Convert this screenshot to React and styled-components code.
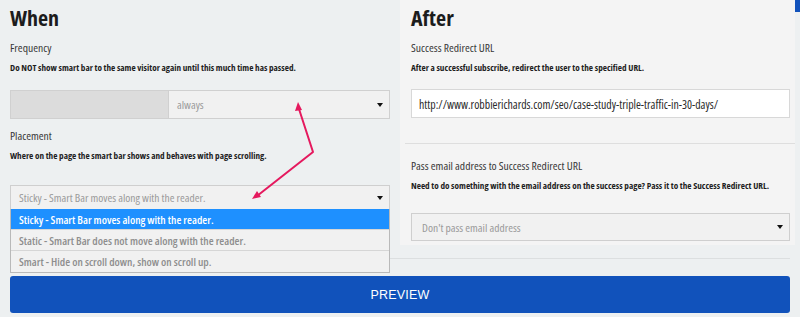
import React from 'react';
import styled, { createGlobalStyle } from 'styled-components';

const GlobalStyle = createGlobalStyle`
  html, body { margin: 0; padding: 0; }
  body { font-family: "Open Sans", "DejaVu Sans", sans-serif; }
  * { box-sizing: border-box; }
`;

const Page = styled.div`
  position: relative;
  width: 800px;
  height: 317px;
  overflow: hidden;
  background: #edf0f1;
  font-family: "Open Sans", sans-serif;
  font-stretch: 75%;
  color: #333;
`;

const Columns = styled.div`
  display: grid;
  grid-template-columns: 400px 395px;
  height: 245px;
`;

const Column = styled.section`
  position: relative;
  padding: ${p => (p.$panel ? '0 5px 0 11px' : '0 10px')};
  background: ${p => (p.$panel ? '#f4f4f4' : 'transparent')};
`;

const Heading = styled.h2`
  margin: 0;
  padding-top: 3px;
  font-size: 22px;
  line-height: 28px;
  font-weight: 700;
  color: #1c1c1c;
`;

const Label = styled.div`
  margin-top: ${p => p.$top || 10}px;
  font-size: 11.6px;
  line-height: 14px;
  color: #383838;
`;

const Help = styled.div`
  margin-top: 6px;
  font-size: 9.2px;
  line-height: 13px;
  font-weight: 700;
  color: #1e1e1e;
`;

const Split = styled.div`
  display: grid;
  grid-template-columns: 158px 1fr;
  height: 29px;
  margin-top: 16px;
  border: 1px solid #d0d0d0;
`;

const Blank = styled.div`
  background: #dcdcdc;
  border-right: 1px solid #d0d0d0;
`;

const SelectBox = styled.div`
  display: flex;
  align-items: center;
  justify-content: space-between;
  height: ${p => p.$h || 28}px;
  margin-top: ${p => p.$top || 0}px;
  padding: 0 6px 0 ${p => p.$pad || 8}px;
  background: #f1f1f1;
  border: ${p => (p.$bare ? 'none' : '1px solid #cfcfcf')};
  border-bottom: ${p => (p.$open ? '2px solid #2a2a2a' : p.$bare ? 'none' : '1px solid #cfcfcf')};
  font-size: 11.5px;
  color: #9a9a9a;
`;

const Caret = styled.span`
  width: 0;
  height: 0;
  border-left: 3px solid transparent;
  border-right: 3px solid transparent;
  border-top: 4px solid #111;
`;

const Menu = styled.ul`
  position: absolute;
  left: 10px;
  right: 10px;
  top: 209px;
  margin: 0;
  padding: 0;
  list-style: none;
  background: #f1f1f1;
  border: 1px solid #b9b9b9;
  border-top: none;
  z-index: 2;
`;

const Option = styled.li`
  height: 21px;
  padding: 0 8px;
  display: flex;
  align-items: center;
  font-size: 11.3px;
  font-weight: 600;
  color: ${p => (p.$active ? '#fff' : '#8e8e8e')};
  background: ${p => (p.$active ? '#1e90ff' : 'transparent')};
  border-bottom: ${p => (p.$last ? 'none' : '1px solid #d6d6d6')};
`;

const TextInput = styled.div`
  display: flex;
  align-items: center;
  height: 29px;
  margin-top: 15px;
  padding: 0 7px;
  background: #fff;
  border: 1px solid #d8d8d8;
  font-size: 11.8px;
  color: #2a2a2a;
`;

const Divider = styled.hr`
  margin: ${p => p.$m || '0'};
  border: none;
  border-top: 1px solid ${p => p.$c || '#dedede'};
`;

const Footer = styled.div`
  padding: 0 10px;
`;

const PreviewButton = styled.button`
  display: block;
  width: 100%;
  height: 37px;
  margin-top: 17px;
  border: none;
  border-radius: 3px;
  background: #1152bb;
  color: #fff;
  font-family: "Liberation Sans", Arial, sans-serif;
  font-size: 12.5px;
  letter-spacing: 0.2px;
  cursor: pointer;
`;

const CornerTab = styled.div`
  position: absolute;
  top: 0;
  right: 0;
  width: 5px;
  height: 12px;
  background: #1152bb;
`;

const Overlay = styled.svg`
  position: absolute;
  inset: 0;
  pointer-events: none;
  z-index: 3;
`;

const placements = [
  'Sticky - Smart Bar moves along with the reader.',
  'Static - Smart Bar does not move along with the reader.',
  'Smart - Hide on scroll down, show on scroll up.',
];

const Arrow = () => (
  <Overlay width="800" height="317" viewBox="0 0 800 317">
    <polyline
      points="299,109 313,152 257,196"
      fill="none"
      stroke="#e5195e"
      strokeWidth="2"
      strokeLinejoin="round"
    />
    <path d="M298,102 L295,111 L302,110 Z" fill="#e5195e" />
    <path d="M252,199 L257,191 L261,197 Z" fill="#e5195e" />
  </Overlay>
);

export default function App() {
  return (
    <>
      <GlobalStyle />
      <Page>
        <Columns>
          <Column>
            <Heading>When</Heading>
            <Label>Frequency</Label>
            <Help>Do NOT show smart bar to the same visitor again until this much time has passed.</Help>
            <Split>
              <Blank />
              <SelectBox $h={27} $pad={8} $bare>
                always
                <Caret />
              </SelectBox>
            </Split>
            <Label>Placement</Label>
            <Help>Where on the page the smart bar shows and behaves with page scrolling.</Help>
            <SelectBox $top={23} $h={26} $open>
              {placements[0]}
              <Caret />
            </SelectBox>
            <Menu>
              {placements.map((text, i) => (
                <Option key={text} $active={i === 0} $last={i === placements.length - 1}>
                  {text}
                </Option>
              ))}
            </Menu>
          </Column>
          <Column $panel>
            <Heading>After</Heading>
            <Label>Success Redirect URL</Label>
            <Help>After a successful subscribe, redirect the user to the specified URL.</Help>
            <TextInput>http://www.robbierichards.com/seo/case-study-triple-traffic-in-30-days/</TextInput>
            <Divider $m="25px -5px 0 -6px" />
            <Label $top={15}>Pass email address to Success Redirect URL</Label>
            <Help>Need to do something with the email address on the success page? Pass it to the Success Redirect URL.</Help>
            <SelectBox $top={21} $h={28} $pad={10}>
              Don't pass email address
              <Caret />
            </SelectBox>
          </Column>
        </Columns>
        <Footer>
          <Divider $m="13px 0 0" $c="#dcdfe0" />
          <PreviewButton>PREVIEW</PreviewButton>
        </Footer>
        <CornerTab />
        <Arrow />
      </Page>
    </>
  );
}
